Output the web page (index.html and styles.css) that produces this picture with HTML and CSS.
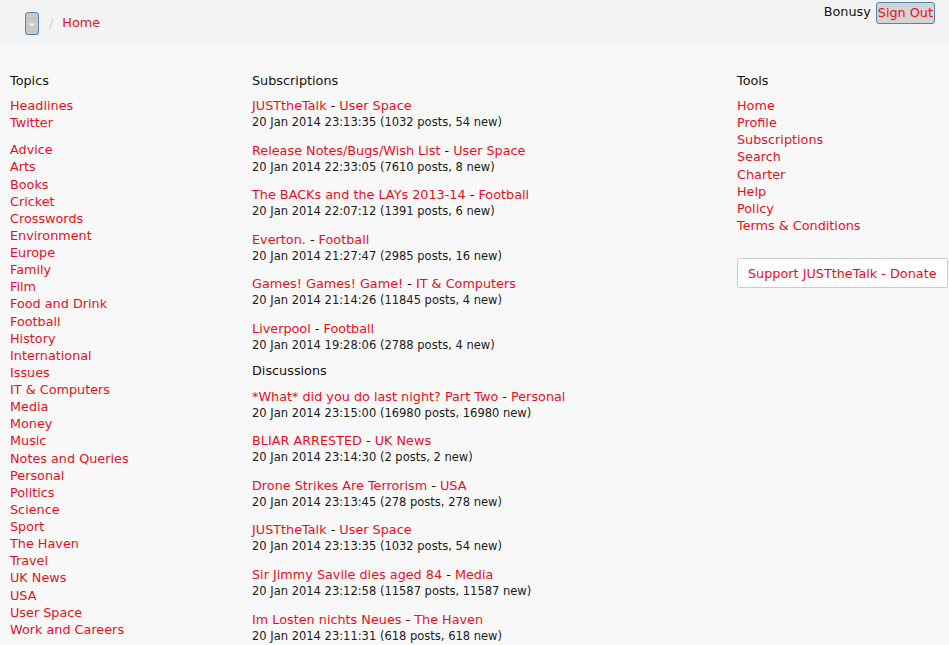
FILE: index.html
```html
<!DOCTYPE html>
<html>
<head>
<meta charset="utf-8">
<link rel="stylesheet" href="styles.css">
</head>
<body>
<div class="header">
  <div class="crumbs">
    <button class="menu-btn"><svg width="8" height="6" viewBox="0 0 8 6"><path d="M1 1.5 L4 4.5 L7 1.5 Z" fill="#fff"/></svg></button>
    <span class="sep">/</span>
    <a href="#">Home</a>
  </div>
  <div class="user">
    <span class="uname">Bonusy</span>
    <button class="signout">Sign Out</button>
  </div>
</div>
<div class="main">
  <div class="col topics">
    <h3>Topics</h3>
    <ul class="list">
      <li><a href="#">Headlines</a></li>
      <li><a href="#">Twitter</a></li>
    </ul>
    <ul class="list gap">
      <li><a href="#">Advice</a></li>
      <li><a href="#">Arts</a></li>
      <li><a href="#">Books</a></li>
      <li><a href="#">Cricket</a></li>
      <li><a href="#">Crosswords</a></li>
      <li><a href="#">Environment</a></li>
      <li><a href="#">Europe</a></li>
      <li><a href="#">Family</a></li>
      <li><a href="#">Film</a></li>
      <li><a href="#">Food and Drink</a></li>
      <li><a href="#">Football</a></li>
      <li><a href="#">History</a></li>
      <li><a href="#">International</a></li>
      <li><a href="#">Issues</a></li>
      <li><a href="#">IT &amp; Computers</a></li>
      <li><a href="#">Media</a></li>
      <li><a href="#">Money</a></li>
      <li><a href="#">Music</a></li>
      <li><a href="#">Notes and Queries</a></li>
      <li><a href="#">Personal</a></li>
      <li><a href="#">Politics</a></li>
      <li><a href="#">Science</a></li>
      <li><a href="#">Sport</a></li>
      <li><a href="#">The Haven</a></li>
      <li><a href="#">Travel</a></li>
      <li><a href="#">UK News</a></li>
      <li><a href="#">USA</a></li>
      <li><a href="#">User Space</a></li>
      <li><a href="#">Work and Careers</a></li>
    </ul>
  </div>
  <div class="col threads">
    <h3>Subscriptions</h3>
    <div class="entry"><div class="title"><a href="#">JUSTtheTalk</a> - <a href="#">User Space</a></div><div class="meta">20 Jan 2014 23:13:35 (1032 posts, 54 new)</div></div>
    <div class="entry"><div class="title"><a href="#">Release Notes/Bugs/Wish List</a> - <a href="#">User Space</a></div><div class="meta">20 Jan 2014 22:33:05 (7610 posts, 8 new)</div></div>
    <div class="entry"><div class="title"><a href="#">The BACKs and the LAYs 2013-14</a> - <a href="#">Football</a></div><div class="meta">20 Jan 2014 22:07:12 (1391 posts, 6 new)</div></div>
    <div class="entry"><div class="title"><a href="#">Everton.</a> - <a href="#">Football</a></div><div class="meta">20 Jan 2014 21:27:47 (2985 posts, 16 new)</div></div>
    <div class="entry"><div class="title"><a href="#">Games! Games! Game!</a> - <a href="#">IT &amp; Computers</a></div><div class="meta">20 Jan 2014 21:14:26 (11845 posts, 4 new)</div></div>
    <div class="entry last"><div class="title"><a href="#">Liverpool</a> - <a href="#">Football</a></div><div class="meta">20 Jan 2014 19:28:06 (2788 posts, 4 new)</div></div>
    <h3 class="sub">Discussions</h3>
    <div class="entry"><div class="title"><a href="#">*What* did you do last night? Part Two</a> - <a href="#">Personal</a></div><div class="meta">20 Jan 2014 23:15:00 (16980 posts, 16980 new)</div></div>
    <div class="entry"><div class="title"><a href="#">BLIAR ARRESTED</a> - <a href="#">UK News</a></div><div class="meta">20 Jan 2014 23:14:30 (2 posts, 2 new)</div></div>
    <div class="entry"><div class="title"><a href="#">Drone Strikes Are Terrorism</a> - <a href="#">USA</a></div><div class="meta">20 Jan 2014 23:13:45 (278 posts, 278 new)</div></div>
    <div class="entry"><div class="title"><a href="#">JUSTtheTalk</a> - <a href="#">User Space</a></div><div class="meta">20 Jan 2014 23:13:35 (1032 posts, 54 new)</div></div>
    <div class="entry"><div class="title"><a href="#">Sir Jimmy Savile dies aged 84</a> - <a href="#">Media</a></div><div class="meta">20 Jan 2014 23:12:58 (11587 posts, 11587 new)</div></div>
    <div class="entry"><div class="title"><a href="#">Im Losten nichts Neues</a> - <a href="#">The Haven</a></div><div class="meta">20 Jan 2014 23:11:31 (618 posts, 618 new)</div></div>
  </div>
  <div class="col tools">
    <h3>Tools</h3>
    <ul class="list">
      <li><a href="#">Home</a></li>
      <li><a href="#">Profile</a></li>
      <li><a href="#">Subscriptions</a></li>
      <li><a href="#">Search</a></li>
      <li><a href="#">Charter</a></li>
      <li><a href="#">Help</a></li>
      <li><a href="#">Policy</a></li>
      <li><a href="#">Terms &amp; Conditions</a></li>
    </ul>
    <a class="donate" href="#">Support JUSTtheTalk - Donate</a>
  </div>
</div>
</body>
</html>
```
FILE: styles.css
```css
html, body {
  margin: 0;
  padding: 0;
  background: #f8f8f8;
}
body {
  font-family: "DejaVu Sans", Verdana, sans-serif;
  font-size: 12.8px;
  color: #111;
  overflow: hidden;
}
a {
  color: #e8101c;
  text-decoration: none;
}
.header {
  display: flex;
  justify-content: space-between;
  align-items: flex-start;
  height: 44px;
  background: #f4f4f4;
  padding: 0 14px 0 25px;
}
.crumbs {
  display: flex;
  align-items: center;
  margin-top: 12px;
}
.menu-btn {
  width: 14px;
  height: 23px;
  padding: 3px 0 0 0;
  border: 1px solid #4f86b8;
  border-radius: 3px;
  background: #c8c8c8;
  display: flex;
  align-items: center;
  justify-content: center;
}
.sep {
  color: #ccc;
  margin: -1px 9px 0 10px;
}
.crumbs a {
  font-size: 12.8px;
  margin-top: -2px;
}
.user {
  display: flex;
  align-items: flex-start;
  gap: 5px;
  margin-top: 2px;
}
.uname {
  margin-top: 2px;
}
.signout {
  font-family: inherit;
  font-size: 12.8px;
  color: #e8101c;
  background: #d4d4d4;
  border: 1px solid #4f86b8;
  border-radius: 3px;
  padding: 2px 1px;
  line-height: 16px;
}
.main {
  display: flex;
  padding: 28px 0 0 10px;
}
.col h3 {
  font-weight: normal;
  font-size: 12.8px;
  margin: 0 0 8px 0;
  line-height: 17px;
}
.topics { width: 242px; }
.threads { width: 485px; }
.tools { flex: 1; }
.list {
  list-style: none;
  margin: 0;
  padding: 0;
  line-height: 17.12px;
}
.list.gap { margin-top: 10px; }
.entry {
  margin-bottom: 11px;
}
.entry.last { margin-bottom: 8px; }
.title {
  line-height: 17px;
}
.meta {
  font-size: 11.5px;
  line-height: 16.6px;
  color: #1a1a1a;
}
h3.sub { margin-bottom: 9px; }
.donate {
  display: inline-block;
  white-space: nowrap;
  margin-top: 24px;
  background: #fff;
  border: 1px solid #ccc;
  border-radius: 2px;
  padding: 6px 10px 5px 10px;
  line-height: 17px;
}
```
